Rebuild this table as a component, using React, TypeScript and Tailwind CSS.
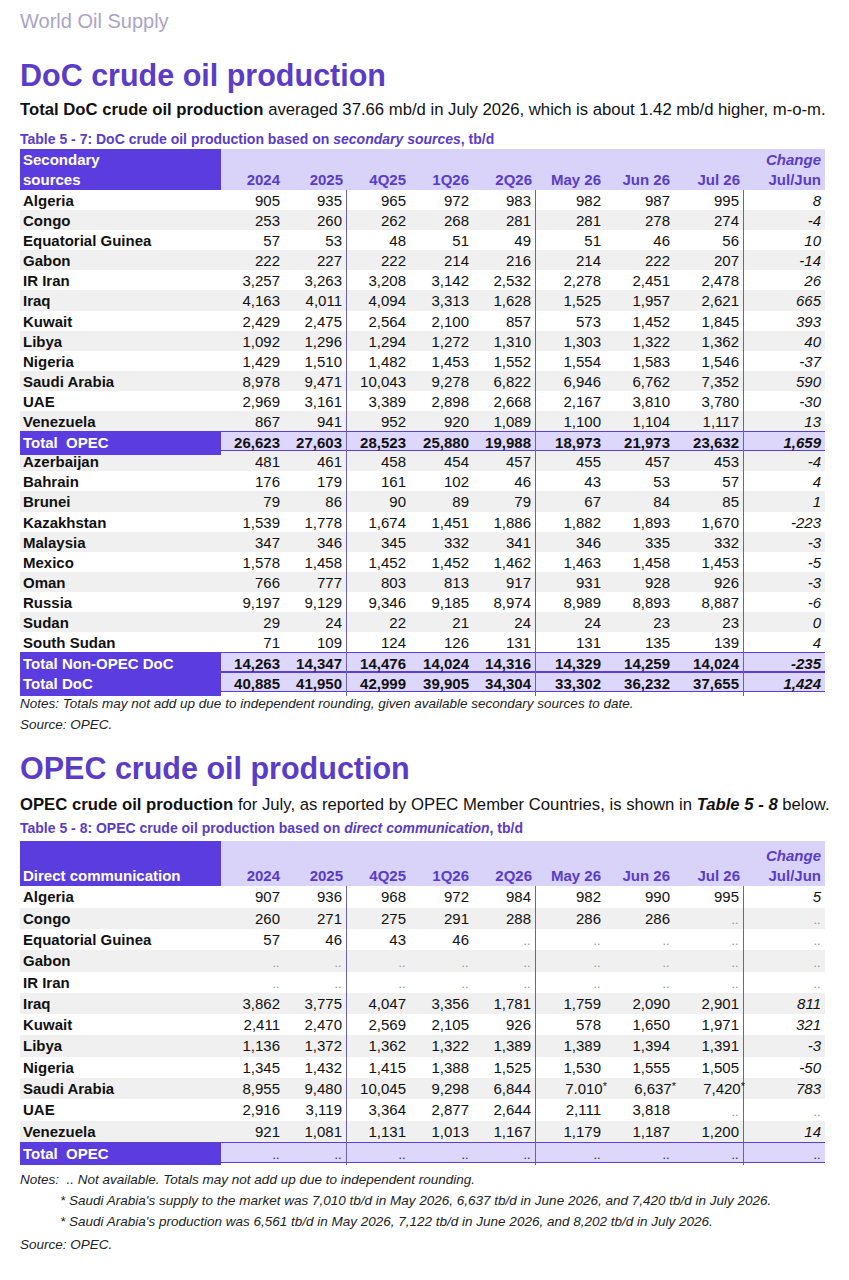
import React from "react";

type Row = { name: string; v: string[]; total?: boolean };

const t1: Row[] = [
  { name: "Algeria", v: ["905", "935", "965", "972", "983", "982", "987", "995", "8"] },
  { name: "Congo", v: ["253", "260", "262", "268", "281", "281", "278", "274", "-4"] },
  { name: "Equatorial Guinea", v: ["57", "53", "48", "51", "49", "51", "46", "56", "10"] },
  { name: "Gabon", v: ["222", "227", "222", "214", "216", "214", "222", "207", "-14"] },
  { name: "IR Iran", v: ["3,257", "3,263", "3,208", "3,142", "2,532", "2,278", "2,451", "2,478", "26"] },
  { name: "Iraq", v: ["4,163", "4,011", "4,094", "3,313", "1,628", "1,525", "1,957", "2,621", "665"] },
  { name: "Kuwait", v: ["2,429", "2,475", "2,564", "2,100", "857", "573", "1,452", "1,845", "393"] },
  { name: "Libya", v: ["1,092", "1,296", "1,294", "1,272", "1,310", "1,303", "1,322", "1,362", "40"] },
  { name: "Nigeria", v: ["1,429", "1,510", "1,482", "1,453", "1,552", "1,554", "1,583", "1,546", "-37"] },
  { name: "Saudi Arabia", v: ["8,978", "9,471", "10,043", "9,278", "6,822", "6,946", "6,762", "7,352", "590"] },
  { name: "UAE", v: ["2,969", "3,161", "3,389", "2,898", "2,668", "2,167", "3,810", "3,780", "-30"] },
  { name: "Venezuela", v: ["867", "941", "952", "920", "1,089", "1,100", "1,104", "1,117", "13"] },
  { name: "Total  OPEC", total: true, v: ["26,623", "27,603", "28,523", "25,880", "19,988", "18,973", "21,973", "23,632", "1,659"] },
  { name: "Azerbaijan", v: ["481", "461", "458", "454", "457", "455", "457", "453", "-4"] },
  { name: "Bahrain", v: ["176", "179", "161", "102", "46", "43", "53", "57", "4"] },
  { name: "Brunei", v: ["79", "86", "90", "89", "79", "67", "84", "85", "1"] },
  { name: "Kazakhstan", v: ["1,539", "1,778", "1,674", "1,451", "1,886", "1,882", "1,893", "1,670", "-223"] },
  { name: "Malaysia", v: ["347", "346", "345", "332", "341", "346", "335", "332", "-3"] },
  { name: "Mexico", v: ["1,578", "1,458", "1,452", "1,452", "1,462", "1,463", "1,458", "1,453", "-5"] },
  { name: "Oman", v: ["766", "777", "803", "813", "917", "931", "928", "926", "-3"] },
  { name: "Russia", v: ["9,197", "9,129", "9,346", "9,185", "8,974", "8,989", "8,893", "8,887", "-6"] },
  { name: "Sudan", v: ["29", "24", "22", "21", "24", "24", "23", "23", "0"] },
  { name: "South Sudan", v: ["71", "109", "124", "126", "131", "131", "135", "139", "4"] },
  { name: "Total Non-OPEC DoC", total: true, v: ["14,263", "14,347", "14,476", "14,024", "14,316", "14,329", "14,259", "14,024", "-235"] },
  { name: "Total DoC", total: true, v: ["40,885", "41,950", "42,999", "39,905", "34,304", "33,302", "36,232", "37,655", "1,424"] },
];

const na = ["..", "..", "..", "..", "..", "..", "..", "..", ".."];

const t2: Row[] = [
  { name: "Algeria", v: ["907", "936", "968", "972", "984", "982", "990", "995", "5"] },
  { name: "Congo", v: ["260", "271", "275", "291", "288", "286", "286", "..", ".."] },
  { name: "Equatorial Guinea", v: ["57", "46", "43", "46", "..", "..", "..", "..", ".."] },
  { name: "Gabon", v: na },
  { name: "IR Iran", v: na },
  { name: "Iraq", v: ["3,862", "3,775", "4,047", "3,356", "1,781", "1,759", "2,090", "2,901", "811"] },
  { name: "Kuwait", v: ["2,411", "2,470", "2,569", "2,105", "926", "578", "1,650", "1,971", "321"] },
  { name: "Libya", v: ["1,136", "1,372", "1,362", "1,322", "1,389", "1,389", "1,394", "1,391", "-3"] },
  { name: "Nigeria", v: ["1,345", "1,432", "1,415", "1,388", "1,525", "1,530", "1,555", "1,505", "-50"] },
  { name: "Saudi Arabia", v: ["8,955", "9,480", "10,045", "9,298", "6,844", "7.010*", "6,637*", "7,420*", "783"] },
  { name: "UAE", v: ["2,916", "3,119", "3,364", "2,877", "2,644", "2,111", "3,818", "..", ".."] },
  { name: "Venezuela", v: ["921", "1,081", "1,131", "1,013", "1,167", "1,179", "1,187", "1,200", "14"] },
  { name: "Total  OPEC", total: true, v: na },
];

const heads = ["2024", "2025", "4Q25", "1Q26", "2Q26", "May 26", "Jun 26", "Jul 26"];

const grid = "grid grid-cols-[201px_63px_63px_63px_63px_63px_69px_69px_70px_81px]";

function Cell({ value, i, total }: { value: string; i: number; total?: boolean }) {
  const line = i === 1 || i === 4 || i === 7 ? "border-r border-[#6a60b0]" : "";
  const last = i === 8;
  if (value === "..") {
    return (
      <div className={`flex items-end justify-end pr-[4px] pb-[4px] ${line}`}>
        <span className={`text-[9px] leading-[9px] tracking-[1px] font-bold ${total ? "text-[#333]" : "text-[#9a9a9a]"}`}>
          ..
        </span>
      </div>
    );
  }
  let content: React.ReactNode = value;
  if (value.endsWith("*")) {
    content = (
      <>
        {value.slice(0, -1)}
        <span className="-mr-[6px] text-[11px] self-start">*</span>
      </>
    );
  }
  return (
    <div className={`flex items-center justify-end pr-[4px] ${line} ${last ? "italic" : ""} ${total ? "font-bold" : ""}`}>
      {content}
    </div>
  );
}

function Table({
  rows,
  header,
  rowH,
  headH,
}: {
  rows: Row[];
  header: React.ReactNode;
  rowH: string;
  headH: string;
}) {
  return (
    <div className="w-[805px] text-[15px] text-[#111]">
      <div className={`${grid} ${headH} bg-[#d9d3fa] text-[#5a3cc8] font-bold`}>
        <div className="bg-[#5b3ddf] text-white flex flex-col justify-end pl-[3px] leading-[20px]">{header}</div>
        {heads.map((h) => (
          <div key={h} className="flex items-end justify-end pr-[4px] leading-[20px]">
            {h}
          </div>
        ))}
        <div className="flex flex-col items-end justify-end pr-[4px] leading-[20px]">
          <span className="italic">Change</span>
          <span>Jul/Jun</span>
        </div>
      </div>
      {rows.map((r, idx) => {
        const odd = idx % 2 === 1;
        if (r.total) {
          return (
            <div key={r.name} className={`${grid} ${rowH} bg-[#ddd7fb] border-y-[1.5px] border-[#5b3ddf]`}>
              <div className="bg-[#5b3ddf] text-white font-bold flex items-center pl-[3px] whitespace-pre">{r.name}</div>
              {r.v.map((v, i) => (
                <Cell key={i} value={v} i={i} total />
              ))}
            </div>
          );
        }
        return (
          <div key={r.name} className={`${grid} ${rowH} ${odd ? "bg-[#f0f0f0]" : "bg-white"}`}>
            <div className="font-bold flex items-center pl-[3px]">{r.name}</div>
            {r.v.map((v, i) => (
              <Cell key={i} value={v} i={i} />
            ))}
          </div>
        );
      })}
    </div>
  );
}

export default function App() {
  return (
    <div className="w-[849px] min-h-[1280px] bg-white pl-[20px] pt-[8px] font-['Liberation_Sans',Arial,sans-serif] text-[#111]">
      <div className="text-[20px] leading-[26px] text-[#aaa4c8]">World Oil Supply</div>

      <h1 className="mt-[23px] text-[30.5px] leading-[36px] font-bold text-[#5a3cc8]">DoC crude oil production</h1>
      <p className="mt-[7px] text-[16.7px] leading-[20px]">
        <b>Total DoC crude oil production</b> averaged 37.66 mb/d in July 2026, which is about 1.42 mb/d higher, m-o-m.
      </p>
      <div className="mt-[10px] text-[14px] leading-[18px] font-bold text-[#5a3cc8]">
        Table 5 - 7: DoC crude oil production based on <i>secondary sources</i>, tb/d
      </div>
      <div className="mt-[1px]">
        <Table
          rows={t1}
          rowH="h-[20.1px]"
          headH="h-[41px]"
          header={
            <>
              <span>Secondary</span>
              <span>sources</span>
            </>
          }
        />
      </div>
      <div className="mt-[1px] text-[13.5px] leading-[21px] italic text-[#222]">
        <div>Notes: Totals may not add up due to independent rounding, given available secondary sources to date.</div>
        <div>Source: OPEC.</div>
      </div>

      <h1 className="mt-[15px] text-[30.5px] leading-[36px] font-bold text-[#5a3cc8]">OPEC crude oil production</h1>
      <p className="mt-[9px] text-[16.7px] leading-[20px]">
        <b>OPEC crude oil production</b> for July, as reported by OPEC Member Countries, is shown in{" "}
        <b>
          <i>Table 5 - 8</i>
        </b>{" "}
        below.
      </p>
      <div className="mt-[4px] text-[14px] leading-[18px] font-bold text-[#5a3cc8]">
        Table 5 - 8: OPEC crude oil production based on <i>direct communication</i>, tb/d
      </div>
      <div className="mt-[4px]">
        <Table rows={t2} rowH="h-[21.3px]" headH="h-[45px]" header={<span>Direct communication</span>} />
      </div>
      <div className="mt-[6px] text-[13.5px] leading-[21px] italic text-[#222]">
        <div className="whitespace-pre">Notes:  .. Not available. Totals may not add up due to independent rounding.</div>
        <div className="pl-[40px]">
          * Saudi Arabia's supply to the market was 7,010 tb/d in May 2026, 6,637 tb/d in June 2026, and 7,420 tb/d in July 2026.
        </div>
        <div className="pl-[40px]">
          * Saudi Arabia's production was 6,561 tb/d in May 2026, 7,122 tb/d in June 2026, and 8,202 tb/d in July 2026.
        </div>
        <div className="mt-[2px]">Source: OPEC.</div>
      </div>
    </div>
  );
}
